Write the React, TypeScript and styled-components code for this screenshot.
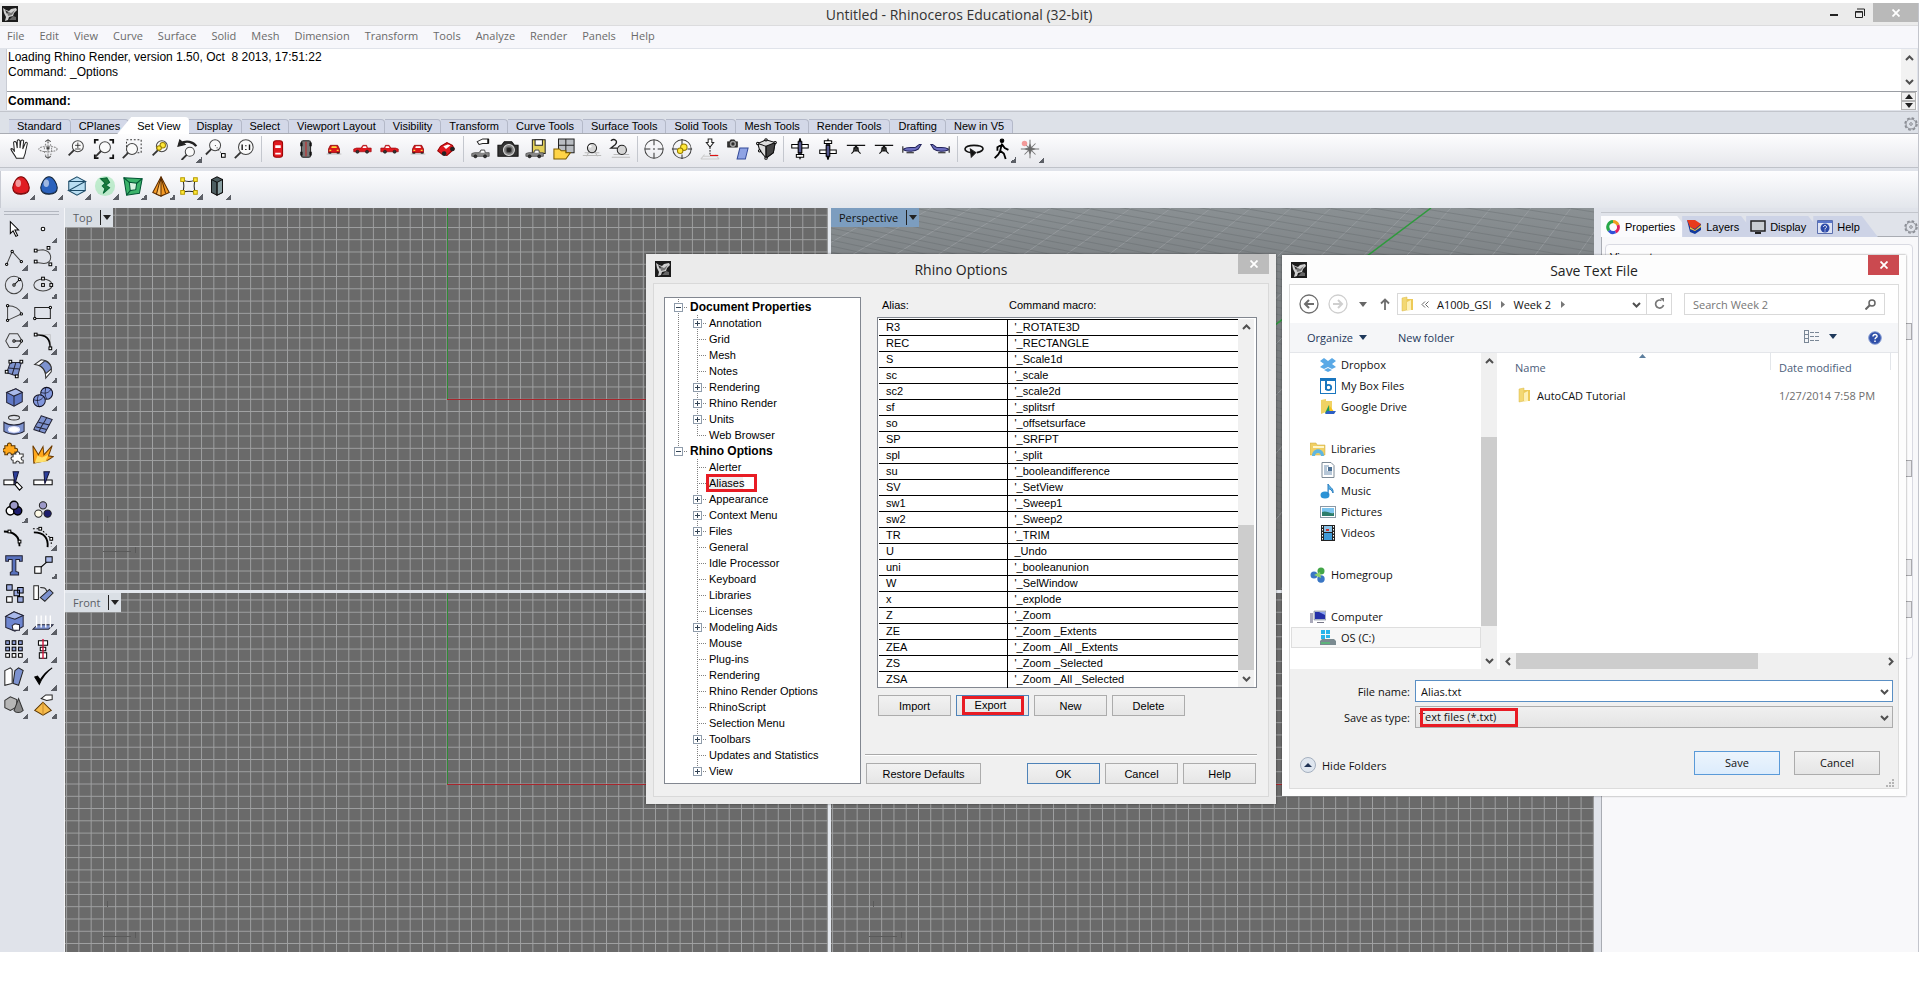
import React from "react";
import styled, { createGlobalStyle, css } from "styled-components";

const UI = `"Open Sans", "Noto Sans", sans-serif`;
const CLASSIC = `"Liberation Sans", Arial, sans-serif`;

const GlobalStyle = createGlobalStyle`
  *, *::before, *::after { box-sizing: border-box; }
  body { margin: 0; background: #fff; font-family: ${UI}; font-size: 11px; color: #000; overflow: hidden; }
  button, input, select { font: inherit; color: inherit; margin: 0; border-radius: 0; }
  ul { list-style: none; margin: 0; padding: 0; }
  svg { display: block; flex: none; }
`;

/* ---------- icon drawings, all on a 24 x 24 board ---------- */

const lens = (x: number, y: number, r = 6) => (
  <g>
    <circle cx={x} cy={y} r={r} fill="#fafafa" stroke="#444" />
    <path d={`M${x - r * 0.7} ${y + r * 0.7}L${x - r - 4} ${y + r + 4}`} stroke="#333" strokeWidth="2" />
  </g>
);
const dots = (pts: number[][], s = 3) => (
  <g fill="#fff" stroke="#000">
    {pts.map(([x, y]) => (
      <rect key={`${x}-${y}`} x={x - s / 2} y={y - s / 2} width={s} height={s} />
    ))}
  </g>
);
const rings = (pts: number[][]) => (
  <g fill="#fff" stroke="#000">
    {pts.map(([x, y]) => (
      <circle key={`${x}-${y}`} cx={x} cy={y} r="1.3" />
    ))}
  </g>
);
const sideCar = (body: string) => (
  <g>
    <path d="M3 15v-3l3-1h5l2-3h4l1 3h4v4z" fill={body} stroke={body === "#888" ? "#444" : "#a00c10"} strokeWidth=".8" />
    <path d="M12.500 11l1-2h3l.5 2z" fill="#fff" stroke="none" />
    <circle cx="7" cy="15" r="1.700" fill="#333" stroke="#111" strokeWidth=".6" />
    <circle cx="17.500" cy="15" r="1.700" fill="#333" stroke="#111" strokeWidth=".6" />
  </g>
);
const frontCar = (glass: string) => (
  <g>
    <path d="M6 12l2-4h8l2 4v4H6z" fill="#d8161b" stroke="#800" strokeWidth=".8" />
    <path d="M9 11l.6-2h5l.6 2z" fill={glass} stroke="none" />
    <path d="M6 16.500h3M15 16.500h3" stroke="#111" strokeWidth="1.500" />
    <path d="M7 13.500h2M15 13.500h2" stroke="#ffd83a" strokeWidth="1.500" />
    <path d="M4 17.500h16" stroke="#999" strokeWidth=".6" />
  </g>
);
const camera = (
  <g>
    <path d="M1 8h4l3-4h8l3 4h4v12H1z" fill="#333" stroke="#111" />
    <circle cx="13" cy="13" r="6" fill="#888" stroke="#ddd" />
    <circle cx="13" cy="13" r="3" fill="#222" stroke="#555" />
  </g>
);
const planeTop = (
  <g>
    <path d="M12 1c2 4 2 16 0 21c-2-5-2-17 0-21z" fill="#6d6fb0" stroke="#000" strokeWidth="1.500" />
    <path d="M3 7h18v4H3zM8 18h8v3H8z" fill="#fff" stroke="#000" />
    <path d="M10 4h4v12h-4z" fill="#55588f" stroke="#000" />
  </g>
);
const planeFront = (
  <g stroke="#111">
    <path d="M2 8h20M9 11h6" strokeWidth="1.200" />
    <path d="M12 8l-3 6M12 8l3 6M7 17l3-3h4l3 3" strokeWidth="1.200" />
    <circle cx="12" cy="12" r="1.500" fill="#555" />
  </g>
);
const planeSide = (
  <g>
    <path d="M3 12c4-3 9-1 13-2l4-3h2l-3 5c-4 3-11 3-16 1z" fill="#6d6fc0" stroke="#22225a" />
    <path d="M2 9v7M6 16h8" stroke="#111" />
  </g>
);
const egg = (c: string, d: string) => (
  <g>
    <path d="M12 2c5 0 9 8 9 12c0 5-4 7-9 7s-9-2-9-7c0-4 4-12 9-12z" fill={c} stroke={d} />
    <ellipse cx="9" cy="9" rx="3" ry="4" fill="#fff" fillOpacity=".55" stroke="none" />
    <path d="M5 17c3 4 11 4 14 0c-2 5-12 5-14 0z" fill="#111" fillOpacity=".5" stroke="none" />
  </g>
);
const BLUE = "#7d92cf";

const ICONS: Record<string, React.ReactNode> = {
  hand: <path d="M8 22C6 18 3 15 2 12c1-1 3 0 4 3L5 5c1-2 2-1 3 0l1 6V3c1-2 2-1 3 0v8l1-8c1-1 2-1 3 0l-1 9 3-7c1-1 2 0 2 1l-2 9c0 3-2 5-2 7z" fill="#fff" />,
  gumball: (
    <g stroke="#888">
      <ellipse cx="12" cy="12" rx="10" ry="3" strokeDasharray="2 1" />
      <path d="M12 2v20" strokeDasharray="4 1" />
      <ellipse cx="12" cy="13" rx="4" ry="8" strokeDasharray="2 2" />
      <path d="M9 4l3-2 3 2M9 20l3 2 3-2" stroke="#444" />
      <circle cx="12" cy="11" r="1.500" fill="#222" />
    </g>
  ),
  zoomInOut: <g>{lens(14, 9)}<path d="M11 8h6M14 5v6M11 12h6" stroke="#222" strokeWidth=".9" /></g>,
  extents: <g>{lens(13, 10)}<path d="M2 6V2h4M18 2h4v4M22 18v4h-4M6 22H2v-4" strokeWidth="2" stroke="#111" /></g>,
  zoomWindow: <g><path d="M6 2h16v14H6z" strokeDasharray="2 2" stroke="#333" />{lens(12, 12)}</g>,
  zoomSelected: <g>{lens(14, 9)}<circle cx="15" cy="8" r="3" fill="#ffe838" stroke="#987d00" /><circle cx="11" cy="11" r="2.500" fill="#ffe838" stroke="#987d00" /></g>,
  undoView: <g>{lens(14, 15, 5)}<path d="M4 6c6-4 14-2 17 3" stroke="#222" strokeWidth="2.500" /><path d="M1 9l2-7 6 5z" fill="#222" /></g>,
  zoomTarget: <g>{lens(11, 8, 6)}<path d="M11 8l8 10" strokeDasharray="1 2" stroke="#222" />{dots([[20, 19]], 4)}</g>,
  zoomOne: <g>{lens(14, 10, 8)}<path d="M10 7v6M18 7v6M14 8v1M14 12v1" stroke="#111" strokeWidth="1.500" /></g>,
  carTop: <g><rect x="7" y="3" width="10" height="18" rx="3" fill="#e01a20" stroke="#900" /><path d="M9 8h6v3H9zM9 16h6v2H9z" fill="#fff" stroke="none" /></g>,
  carBottom: <g><rect x="7" y="3" width="10" height="18" rx="2" fill="#777" stroke="#222" /><path d="M12 4v16" stroke="#c22" /><path d="M7 5v4M17 5v4M7 15v4M17 15v4" stroke="#111" strokeWidth="2.500" /></g>,
  carFront: frontCar("#ffd83a"),
  carRight: sideCar("#e01a20"),
  carLeft: <g transform="matrix(-1 0 0 1 24 0)">{sideCar("#e01a20")}</g>,
  carBack: frontCar("#fff"),
  carPersp: <g><path d="M3 14l3-5 7-4 6 3 2 4-8 7-5-1z" fill="#e01a20" stroke="#900" /><path d="M9 9l5-2 3 1-5 4z" fill="#fff" stroke="none" /><circle cx="10" cy="17" r="2" fill="#222" /><circle cx="19" cy="12" r="2" fill="#222" /></g>,
  namedCar: <g><g transform="translate(0 5)">{sideCar("#888")}</g><path d="M9 4l6-3h6v5h-6l-4 1z" fill="#fff" stroke="#222" /><path d="M21 1v5" strokeWidth="2" stroke="#111" /></g>,
  camera,
  saveCar: <g><path d="M8 2h14v15H8z" fill="#e2cf58" stroke="#222" /><path d="M11 2h8v6h-8z" fill="#fff" stroke="#222" /><g transform="translate(-2 5)">{sideCar("#888")}</g></g>,
  viewports: <g><path d="M6 1h17v15H6zM14 1v15M6 8h17" fill="#b9bdc2" stroke="#222" /><path d="M1 23V12h6l2 2h5v2h5l-5 7z" fill="#ffd447" stroke="#7a5a00" /></g>,
  ball: <g><path d="M4 16h16M2 19h20M6 20l3-5M18 20l-3-5" stroke="#bbb" /><circle cx="12" cy="11" r="5" fill="#d5d5d5" stroke="#222" /><circle cx="10" cy="9" r="1.500" fill="#fff" stroke="none" /></g>,
  ball2: <g><path d="M5 18h17M3 21h20" stroke="#bbb" /><circle cx="14" cy="13" r="5" fill="#d5d5d5" stroke="#222" /><path d="M2 3c4-3 8 0 5 4l-5 4h7" stroke="#222" strokeWidth="1.500" /></g>,
  target: <g><circle cx="12" cy="12" r="10" stroke="#444" /><path d="M12 2v6M12 16v6M2 12h6M16 12h6M12 11v2" stroke="#333" /></g>,
  targetSel: <g><circle cx="12" cy="12" r="10" stroke="#444" /><path d="M12 1v6M12 18v5M1 12h6M18 12h5" stroke="#333" /><circle cx="14" cy="10" r="3.500" fill="#ffe838" stroke="#987d00" /><circle cx="10" cy="14" r="3" fill="#ffe838" stroke="#987d00" /></g>,
  cplane: <g><path d="M4 20h16M2 23h20M6 18l-4 5M18 18l4 5" stroke="#ccc" /><path d="M10 1h4v4h2l-4 5-4-5h2z" fill="#fff" stroke="#222" /><path d="M12 10v9" strokeDasharray="2 1" stroke="#222" /><path d="M12 19h9" stroke="#d00" /></g>,
  camPlane: <g><g transform="scale(.5)">{camera}</g><path d="M14 11h9l-3 12h-9z" fill="#8fa3e4" stroke="#334a9a" /></g>,
  cube: <g><path d="M3 6l9-4 10 3-2 11-8 6-7-9z" fill="#ddd" stroke="#111" /><path d="M12 9l10-4-2 11-8 6z" fill="#444" stroke="#111" /><path d="M3 6l9 3v13" stroke="#111" />{rings([[3, 6], [12, 2], [22, 5], [12, 22], [5, 14]])}</g>,
  planeTop,
  planeBottom: <g transform="rotate(180 12 12)">{planeTop}</g>,
  planeFront,
  planeBack: planeFront,
  planeSide,
  planeSide2: <g transform="matrix(-1 0 0 1 24 0)">{planeSide}</g>,
  orbit: <g><path d="M9 16c-10-1-9-8 3-8s13 6 3 8" stroke="#111" strokeWidth="1.800" /><path d="M8 12l6 4-5 5z" fill="#111" /></g>,
  walk: <g stroke="#000"><circle cx="12" cy="3" r="2" fill="#000" /><path d="M12 6l-2 8 4 3 2 6M10 14l-2 4-4 4M12 7l-5 3v4M12 7l3 4 4 2" strokeWidth="2" /></g>,
  star: <g stroke="#777"><path d="M12 2v20M2 12h20M6 6l12 12M18 6L6 18" /><path d="M12 7l1.500 3.500L17 12l-3.500 1.500L12 17l-1.500-3.500L7 12l3.500-1.500z" fill="#666" /><circle cx="6" cy="6" r="3" fill="#f39a9a" stroke="none" /></g>,

  redEgg: egg("#e01c22", "#700"),
  blueEgg: egg("#2b62bd", "#123"),
  polyhedron: <g stroke="#1c4a66"><path d="M12 2l9 5v10l-9 5-9-5V7z" fill="#b9def2" /><path d="M3 7h18L3 17h18" /></g>,
  glow: <g><circle cx="12" cy="12" r="11" fill="#7fe09a" fillOpacity=".45" stroke="none" /><path d="M7 4l7-1 3 5-4 3 4 3-7 6 2-5-3-3 3-3z" fill="#1f7a3c" stroke="#063" /></g>,
  greenBox: <g stroke="#053"><path d="M2 3l20 1-3 16-14 2z" fill="#3bb36a" /><path d="M8 8l8 1-1 7-6 1z" fill="#d7f3df" /><path d="M2 3l6 5M22 4l-6 5M5 22l4-5" /></g>,
  cone: <g><path d="M12 2l9 17-9 4-9-4z" fill="#f49a24" stroke="#5b2c00" /><path d="M12 2v21l-5-2zM12 2l5 18" stroke="#5b2c00" fill="#ffc56a" /></g>,
  cage: <g><path d="M5 5c5 3 9 3 14 0c-2 5-2 9 0 14c-5-2-9-2-14 0c2-5 2-9 0-14z" stroke="#222" /><path d="M3 3h4v4H3zM17 3h4v4h-4zM3 17h4v4H3zM17 17h4v4h-4z" fill="#ffe838" stroke="#b59a00" /></g>,
  darkBox: <g stroke="#111"><path d="M6 5l6-3 6 3v14l-6 3-6-3z" fill="#4d5d60" /><path d="M12 8l6-3v14l-6 3z" fill="#8aa0a3" /><path d="M6 5l6 3v14" /></g>,

  arrow: <path d="M8 4v13l3-3 3 6 2-1-3-6h4z" fill="#fff" stroke="#000" />,
  point: <circle cx="12" cy="12" r="2" fill="#fff" stroke="#000" />,
  polyline: <g><path d="M4 20l6-14 10 11" stroke="#444" />{rings([[4, 20], [10, 6], [20, 17]])}</g>,
  curve: <g><path d="M5 5l7-1c11 2 11 15 1 15l-8-1" stroke="#444" />{dots([[4, 5], [18, 2], [4, 17], [20, 20]])}</g>,
  circle: <g><circle cx="12" cy="12" r="9.500" stroke="#444" /><path d="M12 12l6-6" stroke="#000" />{rings([[12, 12], [18, 6]])}</g>,
  ellipse: <g><ellipse cx="12" cy="12" rx="10" ry="6.500" stroke="#444" />{dots([[12, 5], [12, 12], [21, 12]])}</g>,
  arc: <g><path d="M5 4c8 0 13 3 15 9L5 20z" stroke="#444" />{rings([[5, 4], [20, 13], [5, 20]])}</g>,
  rect: <g><path d="M3 6h17v12H3z" stroke="#222" />{rings([[20, 6], [3, 18]])}</g>,
  polygon: <g><path d="M7 4h9l5 8-5 7H7l-4-7z" stroke="#444" /><path d="M12 12h8" stroke="#000" />{rings([[12, 12], [20, 12]])}</g>,
  fillet: <g><path d="M4 5c11 0 16 4 16 15" stroke="#000" strokeWidth="2" /><path d="M4 5h16v15" stroke="#aaa" strokeWidth=".6" />{dots([[4, 5], [20, 20]])}</g>,
  patch: <g><path d="M8 5h12l-4 15L4 16z" fill={BLUE} stroke="#223" /><path d="M14 5l-4 13M6 11l12 1" stroke="#223" />{dots([[8, 4], [20, 4], [4, 15], [15, 20]])}</g>,
  bend: <g stroke="#333"><path d="M3 7l7-5c9 1 12 6 11 13l-6 7c0-8-3-14-12-15z" fill="#fff" /><path d="M8 8l6-5c5 2 7 6 7 9l-6 5c-1-4-3-7-7-9z" fill={BLUE} /></g>,
  box: <g stroke="#223"><path d="M4 7l10-4 7 4v10l-9 5-8-4z" fill="#5f78c6" /><path d="M4 7l10-4 7 4-9 4z" fill="#a9b9ea" /><path d="M12 11v11" /></g>,
  spheres: <g stroke="#112"><circle cx="16" cy="8" r="6.500" fill="#8297dc" /><circle cx="8" cy="16" r="6.500" fill="#8297dc" /><path d="M2 15c5 2 9 0 11-4M10 7c5 2 9 0 11-4M7 10c-2 5-1 9 1 13M15 2c-1 5-1 9 1 12" strokeWidth=".8" /></g>,
  pipe: <g><ellipse cx="12" cy="4" rx="6" ry="2.500" stroke="#333" /><path d="M1 9c6 4 16 4 22 0v10c-6 4-16 4-22 0z" fill={BLUE} stroke="#223" /><ellipse cx="12" cy="17" rx="6" ry="3" fill="#fff" stroke="#eef" /></g>,
  surface: <g stroke="#223"><path d="M10 2l12 4-8 15-12-4c1-4 6-10 8-15z" fill={BLUE} /><path d="M16 4c-2 5-7 10-8 15M7 9l12 3M4 14l12 3" /></g>,
  puzzle: <g><path d="M2 4h3c-1-4 5-4 4 0h4v3c4-1 4 5 0 4v3H9c1-3-5-3-4 0H2v-3c-3 0-3-4 0-4z" fill="#ffa81c" stroke="#5b3600" /><path d="M11 13h3c-1-3 5-3 4 0h4v3c-3 0-3 4 0 4v3h-4c0-3-4-3-4 0h-3v-3c-3 0-3-4 0-4z" fill="#fff" stroke="#333" /></g>,
  explode: <g><path d="M2 23L1 4l6 10 5-9 1 9 9-10-4 11 5 1-6 4z" fill="#ffa81c" stroke="#6b3a00" /><path d="M3 23l3-8 5 2 7-3-3 6 3 1z" fill="#ffe06a" stroke="none" /></g>,
  split: <g><path d="M1 11h11v5H1zM15 13l6 6-3 3-5-6z" fill="#fff" stroke="#000" /><path d="M11 2h6l-4 13z" fill="#2c3f9c" stroke="#113" /></g>,
  trim: <g><path d="M2 11h20v5H2z" fill="#fff" stroke="#000" /><path d="M13 2h6l-5 13z" fill="#2c3f9c" stroke="#113" /></g>,
  group: <g stroke="#000" strokeWidth="1.500"><circle cx="8" cy="14" r="4.500" fill="#fff" /><circle cx="16" cy="14" r="4.500" fill="#1e1e6e" /><circle cx="12" cy="8" r="4.500" fill="#9c99c8" /></g>,
  ungroup: <g stroke="#222"><circle cx="7" cy="17" r="4" fill="#fffbe8" /><circle cx="17" cy="17" r="4" fill="#1e1e6e" /><circle cx="12" cy="8" r="4" fill="#9c99c8" /></g>,
  editPts: <g><path d="M1 6c12 0 17 6 17 16" stroke="#000" strokeWidth="2" />{dots([[7, 6], [18, 17]])}</g>,
  ctrlPts: <g><path d="M2 7c11 0 16 6 15 16" stroke="#000" strokeWidth="2" /><path d="M1 3h8l12 11v8" strokeDasharray="2 2" stroke="#000" />{dots([[9, 3], [21, 14]])}</g>,
  text: <path d="M3 2h18v6h-3V6h-4v13l3 1v3H8v-3l2-1V6H6v2H3z" fill="#5871bd" stroke="#223" />,
  scale: <g><path d="M9 15l8-7" stroke="#000" /><path d="M3 14h7v7H3z" fill="#fff" stroke="#000" /><path d="M15 3h7v6h-7z" fill="#a9b9ea" stroke="#000" /></g>,
  array: <g stroke="#000"><path d="M4 3h6v6H4zM16 6h6v6h-6zM12 9h6v6h-6zM16 16h6v6h-6z" fill="#9aaae0" /><path d="M4 16h6v6H4z" fill="#fff" /></g>,
  orient: <g stroke="#222"><path d="M2 4h5v15H2z" fill="#fff" /><path d="M9 17L19 8l4 4-9 9z" fill={BLUE} /><path d="M9 6c4 0 6 0 7 4" /></g>,
  boolean: <g stroke="#223"><path d="M3 7l9-5 10 4v12l-9 5-10-4z" fill="#6e86d0" /><path d="M3 7l9-5 10 4-9 4z" fill="#a9b9ea" /><path d="M10 17l3-2 5 1v6h-7z" fill="#fff" /></g>,
  project: <g><path d="M1 21l5-5h17l-5 5z" fill={BLUE} stroke="#223" /><path d="M5 6v13M10 6v13M15 6v13M20 6v13" stroke="#fff" strokeWidth="1.500" /></g>,
  grid: <g stroke="#000">{[3, 10, 17].map((y) => [3, 10, 17].map((x) => <rect key={`${x}-${y}`} x={x} y={y} width="4" height="4" fill={y === 17 ? "#fff" : "#8f9fd8"} />))}</g>,
  align: <g><path d="M7 3h10v5H7zM9 10h6v4H9zM8 16h8v6H8z" fill="#fff" stroke="#000" /><path d="M12 1v22" stroke="#d0103a" strokeWidth="1.500" /></g>,
  mirror: <g stroke="#222"><path d="M2 5l6-3 2 2v15l-8 2z" fill="#fff" /><path d="M13 5l4-3 5 3-5 16-6-2z" fill={BLUE} /></g>,
  check: <path d="M3 12l5 8C11 13 15 7 22 2c-5 3-10 8-13 13l-3-4z" fill="#000" stroke="#000" />,
  solids: <g stroke="#333"><path d="M2 7l6-4 7 3v8l-7 4-6-3z" fill="#b6b6b6" /><path d="M17 5l5 13c-3 3-8 3-10 0z" fill="#888" /></g>,
  render: <g><path d="M12 9l9 9-9 5-9-5z" fill="#f6bb4b" stroke="#5b3600" /><path d="M12 9v14" stroke="#c78a2a" /><path d="M10 5l5-4h7v5l-6 1z" fill="#fff" stroke="#222" /></g>,
};

const Glyph = ({ name }: { name: string }) => (
  <svg width="22" height="22" viewBox="0 0 24 24" fill="none" stroke="#222" strokeWidth="1.1" aria-hidden="true">
    {ICONS[name]}
  </svg>
);

const RhinoMark = () => (
  <svg width="16" height="16" viewBox="0 0 16 16" aria-hidden="true">
    <rect width="16" height="16" fill="#1b1b1b" />
    <path d="M1 2l3 2 3 1 2-2 5-1 1 2-3 3-1 3-4 1-1 3-3 1 1-4-2-4z" fill="#d0d0d0" />
    <path d="M5 5l4 2 4-3-3 5-4 1z" fill="#777" />
    <path d="M7 14l4-4 3 1v3z" fill="#666" />
    <path d="M3 4l3 2-1 2z" fill="#222" />
  </svg>
);
const CrossMark = () => (
  <svg width="8" height="8" viewBox="0 0 8 8" aria-hidden="true">
    <path d="M.500 .500l7 7M7.500 .500l-7 7" stroke="#fff" strokeWidth="1.800" />
  </svg>
);
const Gear = () => (
  <svg width="14" height="14" viewBox="0 0 14 14" fill="none" stroke="#8a8d94" aria-hidden="true">
    <circle cx="7" cy="7" r="6" strokeWidth="1.500" strokeDasharray="2.700 2" />
    <circle cx="7" cy="7" r="5" />
    <circle cx="7" cy="7" r="1.300" />
  </svg>
);
const TURN = { up: 0, right: 90, down: 180, left: 270 };
const Chevron = ({ dir }: { dir: keyof typeof TURN }) => (
  <svg width="9" height="9" viewBox="0 0 9 9" fill="none" aria-hidden="true">
    <path d="M1 6l3.500-3.500L8 6" stroke="#505050" strokeWidth="2" transform={`rotate(${TURN[dir]} 4.500 4.500)`} />
  </svg>
);
const Caret = ({ color = "#222" }: { color?: string }) => (
  <svg width="8" height="5" viewBox="0 0 8 5" aria-hidden="true">
    <path d="M0 0h8L4 5z" fill={color} />
  </svg>
);

/* ---------- main window ---------- */

const Page = styled.div`
  position: relative;
  min-height: 100vh;
  padding: 3px 4px 47px 0;
  display: flex;
  flex-direction: column;
`;
const MainWindow = styled.main`
  flex: 1;
  display: flex;
  flex-direction: column;
  background: #e0e3ea;
  border-right: 1px solid #c3c5cc;
`;
const TitleBar = styled.header`
  display: grid;
  grid-template-columns: 1fr auto 1fr;
  align-items: start;
  height: 23px;
  background: #ebebeb;
  border-bottom: 1px solid #dcdcde;
`;
const Brand = styled.span`
  padding: 3px 2px;
`;
const Title = styled.h1`
  margin: 0;
  font: 400 14px/23px ${UI};
  color: #333;
`;
const WindowButtons = styled.div`
  display: flex;
  justify-content: flex-end;
`;
const WindowButton = styled.button<{ $close?: boolean }>`
  width: ${(p) => (p.$close ? 45 : 26)}px;
  height: 19px;
  padding: 0;
  border: 0;
  display: grid;
  place-items: center;
  background: ${(p) => (p.$close ? "#b9b9b9" : "transparent")};
`;
const MenuBar = styled.nav`
  display: flex;
  align-items: flex-start;
  gap: 15px;
  height: 22px;
  padding: 0 7px;
  background: #f7f7fb;
`;
const MenuItem = styled.button`
  padding: 0;
  border: 0;
  background: none;
  font-size: 11px;
  line-height: 19px;
  color: #6a6a6a;
`;
const CommandArea = styled.section`
  margin: 1px 1px 0 6px;
  background: #fff;
  border-left: 1px solid #c9ccd4;
  font: 12px/15px ${CLASSIC};
`;
const History = styled.div`
  display: flex;
  justify-content: space-between;
  height: 43px;
  border-bottom: 1px solid #9a9da3;
`;
const HistoryText = styled.div`
  padding: 1px;
  white-space: pre;
`;
const HistoryScroll = styled.div`
  width: 16px;
  padding: 5px 0;
  display: flex;
  flex-direction: column;
  align-items: center;
  justify-content: space-between;
  background: #f2f2f2;
`;
const Prompt = styled.div`
  display: flex;
  height: 18px;
  align-items: center;
`;
const PromptLabel = styled.label`
  padding: 0 4px 0 1px;
  font-size: 12px;
  font-weight: 700;
`;
const PromptInput = styled.input`
  flex: 1;
  height: 18px;
  border: 0;
  outline: 0;
  padding: 0;
`;
const Spinner = styled.div`
  display: grid;
  width: 15px;
  height: 18px;
  margin-right: 1px;
`;
const SpinButton = styled.button<{ $flip?: boolean }>`
  padding: 0;
  border: 1px solid #b5b5b5;
  background: #f0f0f0;
  display: grid;
  place-items: center;
  svg { transform: ${(p) => (p.$flip ? "none" : "rotate(180deg)")}; }
`;
const TabStrip = styled.div`
  display: flex;
  align-items: flex-end;
  height: 23px;
  margin-top: 1px;
  padding-left: 9px;
  border-top: 1px solid #c2c5cc;
  border-bottom: 1px solid #a9acb3;
  background: #dde1e8;
`;
const ToolTab = styled.button<{ $active?: boolean }>`
  height: 14px;
  padding: 0 8px;
  border: 1px solid #b4b9c9;
  border-width: 1px 1px 0 0;
  border-radius: 0 4px 0 0;
  background: ${(p) => (p.$active ? "#fff" : "#d3d8e8")};
  font: 11px/13px ${CLASSIC};
  white-space: nowrap;
  ${(p) =>
    p.$active &&
    css`
      height: 17px;
      margin: 0 -1px -1px -12px;
      padding: 2px 9px 0 20px;
      border-width: 0;
      clip-path: polygon(14px 0, 100% 0, 100% 100%, 0 100%);
    `}
`;
const Push = styled.span`
  margin-left: auto;
  padding-bottom: 2px;
`;
const ToolRow = styled.div<{ $second?: boolean }>`
  display: flex;
  align-items: center;
  height: 34px;
  padding: 0 0 4px 6px;
  background: linear-gradient(#fdfdfe, ${(p) => (p.$second ? "#e3e6ec" : "#e6e7ec")});
  ${(p) =>
    p.$second
      ? css`
          height: 37px;
          margin-top: 3px;
          border-left: 1px solid #c9ccd4;
          padding-bottom: 8px;
        `
      : css`
          border-bottom: 1px solid #bfc2c9;
        `}
`;
const ToolButton = styled.button<{ $more?: boolean }>`
  width: 28px;
  height: 28px;
  flex: none;
  padding: 0;
  border: 0;
  display: grid;
  place-items: center;
  background: ${(p) =>
    p.$more ? "linear-gradient(135deg, transparent 50%, #5c5f66 50%) right bottom / 6px 6px no-repeat" : "none"};
`;
const Divider = styled.span`
  width: 1px;
  height: 26px;
  margin: 0 2px 0 3px;
  background: #c4c7ce;
`;

const Workspace = styled.div`
  flex: 1;
  display: flex;
  min-height: 0;
`;
const SideTools = styled.aside`
  width: 65px;
  padding: 3px 5px 0 0;
  border-right: 1px solid #f4f5f8;
`;
const Grip = styled.div`
  height: 4px;
  margin-left: 4px;
  border: 1px solid #b3b7c0;
  border-width: 1px 0;
`;
const SideGrid = styled.div`
  display: grid;
  grid-template-columns: 29px 28px;
  grid-auto-rows: 28px;
`;
const Viewports = styled.div`
  flex: 1;
  display: grid;
  grid-template-columns: 1fr 1fr;
  grid-template-rows: 381fr 359fr;
  gap: 3px;
  background: #e4e8ee;
`;
const ViewportBox = styled.section<{ $persp?: boolean }>`
  display: grid;
  min-height: 0;
  min-width: 0;
  overflow: hidden;
  background: ${(p) => (p.$persp ? "linear-gradient(#8a9093, #7e8386 50px, #6a6a6a 400px)" : "#6a6a6a")};
  > * { grid-area: 1 / 1; }
  > svg { width: 100%; height: 100%; }
`;
const ViewLabel = styled.button<{ $active?: boolean }>`
  justify-self: start;
  align-self: start;
  display: flex;
  align-items: center;
  height: 19px;
  padding: 0 0 0 8px;
  border: 0;
  background: ${(p) => (p.$active ? "#7c9dbf" : "#dadfe5")};
  color: ${(p) => (p.$active ? "#111" : "#5b6066")};
  font-size: 11px;
`;
const LabelCaret = styled.span`
  margin-left: 8px;
  padding: 5px 2px;
  border-left: 1px solid #222;
`;

const PlanGrid = ({ id, axis }: { id: string; axis: string }) => (
  <svg aria-hidden="true" shapeRendering="crispEdges">
    <defs>
      <pattern id={id} width="12.270" height="12.270" patternUnits="userSpaceOnUse">
        <path d="M.5 0V12.270M0 .5H12.270" stroke="#a0a1a2" strokeWidth="1" />
      </pattern>
    </defs>
    <svg x="50%" y={axis} overflow="visible">
      <rect x="-490.800" y="-245.400" width="981.600" height="736.200" fill={`url(#${id})`} />
      <path d="M.5 0V-300" stroke="#2f8a35" />
      <path d="M0 .5H400" stroke="#a8262c" />
    </svg>
    <path d="M42 308v6M38 343h28M70 339v6" stroke="#5a5a5a" />
  </svg>
);
const PerspGrid = () => (
  <svg aria-hidden="true">
    <g strokeWidth="1" fill="none">
      {Array.from({ length: 46 }, (_, i) => (
        <path key={`a${i}`} d={`M${i * 40 - 260} 0L${i * 62 - 1100} 381`} stroke="#a5aaad" strokeOpacity=".5" />
      ))}
      {Array.from({ length: 60 }, (_, i) => (
        <path key={`b${i}`} d={`M0 ${i * 6 - 160}L763 ${i * 8 - 60}`} stroke="#5f6467" strokeOpacity=".35" />
      ))}
      <path d="M600 0L400 150L0 360" stroke="#2e9a3c" strokeWidth="1.500" />
    </g>
  </svg>
);
const Viewport = ({ name, active, axis = "50%" }: { name: string; active?: boolean; axis?: string }) => (
  <ViewportBox $persp={active} aria-label={`${name} viewport`}>
    {active ? <PerspGrid /> : <PlanGrid id={`grid-${name}`} axis={axis} />}
    <ViewLabel $active={active}>
      {name}
      <LabelCaret>
        <Caret />
      </LabelCaret>
    </ViewLabel>
  </ViewportBox>
);

const Panel = styled.aside`
  width: 324px;
  padding: 4px 0 0 7px;
  display: flex;
  flex-direction: column;
`;
const PanelTabs = styled.div`
  display: flex;
  align-items: flex-end;
  height: 25px;
  border-top: 1px solid #c2c5cc;
  border-bottom: 1px solid #a9acb3;
`;
const PanelTab = styled.button<{ $active?: boolean }>`
  display: flex;
  align-items: center;
  gap: 4px;
  height: 21px;
  margin-bottom: -1px;
  padding: 0 18px 0 4px;
  border: 0;
  background: ${(p) => (p.$active ? "#fbfbfd" : "#cdd3e6")};
  clip-path: polygon(0 0, calc(100% - 16px) 0, 100% 100%, 0 100%);
  font: 11px/20px ${CLASSIC};
  & + & { margin-left: -11px; }
`;
const PanelBody = styled.div`
  flex: 1;
  padding: 7px 5px 0 3px;
  background: #f8f8fa;
  border-left: 1px solid #a9acb3;
`;
const PanelGroup = styled.div`
  display: flex;
  flex-direction: column;
  align-items: flex-end;
  height: 415px;
  border: 1px solid #d9dae2;
  border-radius: 4px;
  background: #fcfcfd;
`;
const PanelHeading = styled.h2`
  align-self: flex-start;
  margin: 5px 0 59px 4px;
  font: 11px/14px ${CLASSIC};
`;
const PanelField = styled.button<{ $gap: number }>`
  width: 40px;
  height: 17px;
  flex: none;
  margin-bottom: ${(p) => p.$gap}px;
  border: 1px solid #a9a9ad;
  background: #e9e9ec;
`;

/* ---------- dialogs ---------- */

const Dialog = styled.section<{ $x: number; $y: number; $w: number; $light?: boolean }>`
  position: absolute;
  left: ${(p) => p.$x}px;
  top: ${(p) => p.$y}px;
  width: ${(p) => p.$w}px;
  padding: 0 7px 7px;
  background: ${(p) => (p.$light ? "#fdfdfd" : "#ebebeb")};
  box-shadow: 0 0 2px rgba(0, 0, 0, 0.45);
`;
const DialogTitle = styled.header`
  display: grid;
  grid-template-columns: 1fr auto 1fr;
  height: 29px;
  align-items: start;
`;
const DialogBrand = styled.span`
  padding: 7px 2px 0;
`;
const DialogHeading = styled.h2`
  margin: 0;
  font: 400 14px/31px ${UI};
  color: #222;
`;
const DialogClose = styled.button<{ $red?: boolean }>`
  justify-self: end;
  width: 31px;
  height: 20px;
  padding: 0;
  border: 0;
  display: grid;
  place-items: center;
  background: ${(p) => (p.$red ? "#cb4a50" : "#bcbcbc")};
`;
const OptionsBody = styled.div`
  display: flex;
  gap: 4px;
  height: 514px;
  padding: 13px 11px 12px 10px;
  border: 1px solid #d9d9d9;
  background: #f0f0f0;
  font: 11px/16px ${CLASSIC};
`;
const Tree = styled.ul`
  width: 197px;
  padding: 1px 0 0 4px;
  border: 1px solid #828790;
  background: #fff;
`;
const TreeRow = styled.li`
  display: flex;
  height: 16px;
`;
const vLine = "repeating-linear-gradient(#808080 0 1px, transparent 1px 2px) 9px 0";
const hLine = "repeating-linear-gradient(90deg, #808080 0 1px, transparent 1px 2px) 9px 8px / 10px 1px no-repeat";
const Guide = styled.span<{ $v?: boolean; $h?: boolean; $end?: boolean }>`
  width: 19px;
  display: grid;
  place-items: center;
  background: ${(p) =>
    [p.$v && `${vLine} / 1px ${p.$end ? "8px" : "16px"} no-repeat`, p.$h && hLine].filter(Boolean).join(", ") || "none"};
`;
const Expander = styled.button`
  width: 9px;
  height: 9px;
  padding: 0;
  border: 1px solid #8f9cab;
  background: #fff;
`;
const TreeLabel = styled.span<{ $root?: boolean; $marked?: boolean }>`
  padding: 0 2px;
  font-weight: ${(p) => (p.$root ? 700 : 400)};
  ${(p) => p.$root && "font-size: 12px;"}
  white-space: nowrap;
  ${(p) =>
    p.$marked &&
    css`
      width: 51px;
      margin: -1px 0 -1px -1px;
      padding: 1px 3px 0;
      background: linear-gradient(#efefef, #efefef) 3px 3px / 34px 12px no-repeat;
      box-shadow: inset 0 0 0 3px #e81c24;
    `}
`;
const OptionsMain = styled.div`
  flex: 1;
  display: flex;
  flex-direction: column;
`;
const ColumnHeads = styled.div`
  display: grid;
  grid-template-columns: 127px 1fr;
  padding-left: 17px;
  line-height: 17px;
  height: 20px;
`;
const TableBox = styled.div`
  display: flex;
  height: 371px;
  margin-left: 12px;
  padding: 1px 2px 0 1px;
  border: 1px solid #828790;
  background: #fff;
`;
const AliasTable = styled.table`
  flex: 1;
  height: 368px;
  border-collapse: collapse;
  td {
    height: 16px;
    padding: 0 7px;
    border-top: 1px solid #000;
    line-height: 15px;
  }
  td:first-child {
    width: 128px;
    border-right: 1px solid #000;
  }
`;
const ScrollV = styled.div`
  width: 16px;
  flex: none;
  display: flex;
  flex-direction: column;
  align-items: center;
  background: #f0f0f0;
`;
const ScrollH = styled.div`
  display: flex;
  align-items: center;
  height: 16px;
  background: #f0f0f0;
`;
const Arrow = styled.button`
  width: 16px;
  height: 17px;
  flex: none;
  padding: 0;
  border: 0;
  display: grid;
  place-items: center;
  background: none;
`;
const Thumb = styled.span<{ $size: number }>`
  flex: ${(p) => p.$size} 0 0;
  align-self: stretch;
  background: #cdcdcd;
`;
const Track = styled.span<{ $size: number }>`
  flex: ${(p) => p.$size} 0 0;
`;
const ButtonRow = styled.div<{ $foot?: boolean }>`
  display: flex;
  gap: 5px;
  padding: 7px 0 0 13px;
  ${(p) =>
    p.$foot &&
    css`
      margin-top: auto;
      padding: 8px 0 0 1px;
      border-top: 1px solid #a9a9a9;
      box-shadow: inset 0 1px #fff;
    `}
`;
const PushButton = styled.button<{ $w?: number; $focus?: boolean; $after?: number }>`
  display: grid;
  place-items: center;
  width: ${(p) => p.$w ?? 73}px;
  height: 21px;
  padding: 0;
  margin-right: ${(p) => p.$after ?? 0}px;
  border: 1px solid ${(p) => (p.$focus ? "#4f83b8" : "#acacac")};
  background: linear-gradient(#f2f2f2, #e6e6e6);
  line-height: 18px;
`;
const RedFrame = styled.span`
  width: 62px;
  height: 19px;
  border: 3px solid #e81c24;
  line-height: 13px;
  padding-right: 4px;
`;

/* ---------- save dialog ---------- */

const SaveBody = styled.div`
  border: 1px solid #dcdcdc;
  background: #f0f0f0;
  font-size: 11px;
  color: #111;
`;
const NavRow = styled.div`
  display: flex;
  align-items: center;
  height: 38px;
  padding: 0 13px 0 9px;
  background: #fff;
`;
const RoundButton = styled.button<{ $m?: number }>`
  width: 20px;
  height: 20px;
  padding: 0;
  margin-right: ${(p) => p.$m ?? 0}px;
  border: 0;
  display: grid;
  place-items: center;
  background: none;
`;
const Address = styled.div`
  display: flex;
  align-items: center;
  width: 275px;
  height: 22px;
  margin-left: 2px;
  padding-left: 2px;
  border: 1px solid #d9d9d9;
`;
const Crumb = styled.button<{ $earlier?: boolean }>`
  padding: 0;
  margin: ${(p) => (p.$earlier ? "0 0 0 5px" : "0 10px 0 8px")};
  border: 0;
  background: none;
`;
const AddressEnd = styled.span`
  display: flex;
  align-items: center;
  margin-left: auto;
`;
const Refresh = styled.button`
  width: 25px;
  height: 20px;
  margin-left: 5px;
  padding: 0;
  border: 0;
  border-left: 1px solid #d9d9d9;
  background: none;
  display: grid;
  place-items: center;
`;
const SearchBox = styled.label`
  flex: 1;
  display: flex;
  align-items: center;
  height: 22px;
  margin-left: 12px;
  padding: 0 8px;
  border: 1px solid #d9d9d9;
`;
const SearchInput = styled.input`
  flex: 1;
  min-width: 0;
  padding: 0;
  border: 0;
  outline: 0;
  background: none;
  &::placeholder { color: #767676; opacity: 1; }
`;
const FileTools = styled.div`
  display: flex;
  align-items: center;
  height: 30px;
  padding: 0 16px 0 17px;
  background: #f5f6f8;
  border-bottom: 1px solid #e4e6ea;
  color: #1e395b;
`;
const FlatButton = styled.button<{ $gap?: number; $inner?: number }>`
  display: flex;
  align-items: center;
  gap: ${(p) => p.$inner ?? 6}px;
  padding: 0;
  margin-right: ${(p) => p.$gap ?? 0}px;
  border: 0;
  background: none;
`;
const FolderToggle = styled(FlatButton)`
  padding-top: 4px;
`;
const Panes = styled.div`
  display: flex;
  height: 316px;
  background: #fff;
`;
const Places = styled.ul`
  width: 191px;
  padding: 1px 0 0 1px;
`;
const Place = styled.li<{ $group?: boolean; $above?: boolean; $selected?: boolean }>`
  display: flex;
  align-items: center;
  gap: 5px;
  height: 21px;
  margin-top: ${(p) => (p.$above ? 21 : 0)}px;
  padding-left: ${(p) => (p.$group ? 18 : 28)}px;
  border: 1px solid ${(p) => (p.$selected ? "#dedede" : "transparent")};
  background: ${(p) => (p.$selected ? "#f7f7f7" : "none")};
`;
const Files = styled.div`
  flex: 1;
  display: flex;
  flex-direction: column;
  justify-content: space-between;
  padding-left: 3px;
`;
const FileTable = styled.table`
  width: 100%;
  border-collapse: collapse;
  margin-left: 8px;
  th {
    position: relative;
    height: 17px;
    padding: 8px 0 0 9px;
    font-weight: 400;
    text-align: left;
    line-height: 13px;
    color: #4c607a;
    background: linear-gradient(#e3e6ea, #e3e6ea) 0 0 / 1px 17px no-repeat;
  }
  th:first-child {
    padding-left: 7px;
    background: none;
  }
  td {
    height: 21px;
    padding: 13px 0 0 9px;
    color: #6d6d6d;
  }
`;
const SortMark = styled.span`
  position: absolute;
  top: 1px;
  left: 50%;
`;
const FileName = styled.span`
  display: flex;
  align-items: center;
  gap: 4px;
  color: #111;
`;
const Form = styled.div`
  display: grid;
  grid-template-columns: 125px 1fr;
  row-gap: 4px;
  align-items: center;
  padding: 11px 5px 0 0;
`;
const FormLabel = styled.label`
  padding-right: 5px;
  text-align: right;
`;
const Field = styled.div`
  display: grid;
  align-items: center;
  > * { grid-area: 1 / 1; }
  > svg { justify-self: end; margin-right: 4px; pointer-events: none; }
`;
const fieldStyle = css`
  width: 100%;
  height: 22px;
  padding: 0 5px;
  outline: 0;
  line-height: 20px;
`;
const NameInput = styled.input`
  ${fieldStyle}
  border: 1px solid #5a8fc4;
  background: #fff;
`;
const TypeSelect = styled.select`
  ${fieldStyle}
  padding: 0 3px;
  appearance: none;
  border: 1px solid #acacac;
  background: linear-gradient(#f0f0f0, #e4e4e4);
`;
const TypeMark = styled.span`
  width: 98px;
  height: 19px;
  margin-left: 5px;
  border: 3px solid #e81c24;
  pointer-events: none;
`;
const SaveFoot = styled.div`
  display: flex;
  align-items: center;
  height: 60px;
  padding: 10px 0 0 10px;
`;
const SaveButton = styled.button<{ $primary?: boolean }>`
  width: 86px;
  height: 24px;
  margin-right: ${(p) => (p.$primary ? 14 : 6)}px;
  padding: 0 0 2px;
  border: 1px solid ${(p) => (p.$primary ? "#5a9ad8" : "#acacac")};
  background: ${(p) => (p.$primary ? "linear-gradient(#ecf4fc, #dcecfc)" : "linear-gradient(#f2f2f2, #e5e5e5)")};
  ${(p) => p.$primary && "margin-left: auto;"}
`;
const SizeGrip = () => (
  <svg width="9" height="9" viewBox="0 0 9 9" fill="#b5b5b5" aria-hidden="true">
    <path d="M6 0h2v2H6zM3 3h2v2H3zM6 3h2v2H6zM0 6h2v2H0zM3 6h2v2H3zM6 6h2v2H6z" />
  </svg>
);
const GripSpot = styled.span`
  align-self: flex-end;
  margin-right: 3px;
`;

const PLACE_ICONS: Record<string, React.ReactNode> = {
  folder: <g><path d="M2 2l5-1v13l-5 1z" fill="#f3d873" stroke="#d9b84a" strokeWidth=".5" /><path d="M7 3h6v11H7z" fill="#edca58" /><path d="M7 6l4-2v10l-4 1z" fill="#fdf0b5" /></g>,
  dropbox: <path d="M4 1l4 3 4-3 4 3-4 3 4 3-4 2-4-2-4 2-4-2 4-3-4-3zM4 13l4-2 4 2-4 2z" fill="#5aa9e6" />,
  box: <g><rect x=".5" y=".5" width="15" height="15" fill="#fff" stroke="#1976bf" /><path d="M0 0h16v3H0z" fill="#1976bf" /><path d="M6 3v9" stroke="#1976bf" strokeWidth="2" /><circle cx="8.500" cy="9.500" r="2.700" fill="none" stroke="#1976bf" strokeWidth="1.800" /></g>,
  drive: <g><path d="M1 1l5-1v13l-5 2zM6 2h6v11H6z" fill="#f0d265" /><path d="M9 6l-4 8h5z" fill="#1b9b57" /><path d="M9 6l6 8h-5z" fill="#f5c21b" /><path d="M5 15l2-3h9l-2 3z" fill="#2c5fc4" /></g>,
  libraries: <g><path d="M0 2h6l1 2h8v10H0z" fill="#f0cf64" stroke="#c9a438" strokeWidth=".5" /><path d="M2 15c0-9 12-9 12 0h-3c0-4-6-4-6 0z" fill="#5fb6e0" /><path d="M3 5h11v2H3z" fill="#fff6c9" /></g>,
  documents: <g><path d="M2 .5h9l3 3v12H2z" fill="#fff" stroke="#7d8a96" /><path d="M4 4h5M4 6h3M4 8h3M4 10h8M4 12h8" stroke="#6f8fb0" /><path d="M8 5h4v4H8z" fill="#4a6f94" /></g>,
  music: <g><ellipse cx="5" cy="12" rx="4.500" ry="3.500" fill="#2b93d6" /><path d="M8 12V1c1 3 6 4 5 9c-1-3-3-4-4-4" stroke="#2b7fc0" fill="#59b0e6" /></g>,
  pictures: <g><rect x=".5" y="2.500" width="15" height="11" fill="#fff" stroke="#8a98a5" /><path d="M2 4h12v5H2z" fill="#7cc4ee" /><path d="M2 8c4-2 8 2 12 1v3H2z" fill="#2d7d6b" /></g>,
  videos: <g><path d="M1 0h14v16H1z" fill="#222" /><path d="M4 1h8v6H4z" fill="#8cc3e8" /><path d="M4 8h8v7H4z" fill="#3f9ad8" /><path d="M6 4h3v2H6z" fill="#c33" /><path d="M2.500 1v14M13.500 1v14" stroke="#fff" strokeDasharray="1.500 1.500" /></g>,
  homegroup: <g><circle cx="4" cy="8" r="3.500" fill="#3a76c4" /><circle cx="11" cy="4" r="3.500" fill="#43a648" /><circle cx="11" cy="12" r="3.700" fill="#3a76c4" /><path d="M4 8l6-3 1 6z" fill="#8fd06a" /></g>,
  computer: <g><path d="M4 2h12v9H4z" fill="#b9c4d6" stroke="#7c8798" strokeWidth=".6" /><path d="M5 3h10v7H5z" fill="#2330a8" /><path d="M9 3h6v3z" fill="#8aa2f0" /><path d="M0 4h3v10H0z" fill="#aab" /><path d="M7 13h7v1H7z" fill="#778" /></g>,
  disk: <g><path d="M1 0h4v4H1zM6 0h4v4H6zM1 5h4v4H1zM6 5h4v3H6z" fill="#28b4ea" /><path d="M0 11l2-2h12l2 2v4H0z" fill="#7a8a90" /><path d="M1 12h9v2H1z" fill="#5db37b" /></g>,
};
const PlaceIcon = ({ name }: { name: string }) => (
  <svg width="16" height="16" viewBox="0 0 16 16" aria-hidden="true">
    {PLACE_ICONS[name]}
  </svg>
);
const Tri = () => (
  <svg width="4" height="7" viewBox="0 0 4 7" aria-hidden="true">
    <path d="M0 0l4 3.500L0 7z" fill="#777" />
  </svg>
);

/* ---------- data ---------- */

const MENUS = "File Edit View Curve Surface Solid Mesh Dimension Transform Tools Analyze Render Panels Help".split(" ");
const TABS = ["Standard", "CPlanes", "Set View", "Display", "Select", "Viewport Layout", "Visibility", "Transform", "Curve Tools", "Surface Tools", "Solid Tools", "Mesh Tools", "Render Tools", "Drafting", "New in V5"];
const TOOLBAR = "hand gumball zoomInOut extents zoomWindow zoomSelected undoView+ zoomTarget zoomOne | carTop carBottom carFront carRight carLeft carBack carPersp | namedCar camera saveCar viewports ball ball2 | target targetSel cplane camPlane cube | planeTop planeBottom planeFront planeBack planeSide planeSide2 | orbit walk+ star+".split(" ");
const SECOND = "redEgg+ blueEgg+ polyhedron+ glow+ greenBox+ cone+ cage+ darkBox+".split(" ");
const SIDE = "arrow point+ polyline+ curve+ circle+ ellipse+ arc+ rect+ polygon+ fillet+ patch+ bend+ box+ spheres+ pipe+ surface+ puzzle explode split trim group+ ungroup editPts ctrlPts+ text scale+ array orient boolean+ project+ grid+ align+ mirror+ check+ solids+ render+".split(" ");

const TREE: { name: string; items: string[] }[] = [
  { name: "Document Properties", items: ["+Annotation", "Grid", "Mesh", "Notes", "+Rendering", "+Rhino Render", "+Units", "Web Browser"] },
  {
    name: "Rhino Options",
    items: ["Alerter", "Aliases", "+Appearance", "+Context Menu", "+Files", "General", "Idle Processor", "Keyboard", "Libraries", "Licenses", "+Modeling Aids", "Mouse", "Plug-ins", "Rendering", "Rhino Render Options", "RhinoScript", "Selection Menu", "+Toolbars", "Updates and Statistics", "+View"],
  },
];
const ALIASES: [string, string][] = [
  ["R3", "'_ROTATE3D"], ["REC", "'_RECTANGLE"], ["S", "'_Scale1d"], ["sc", "'_scale"], ["sc2", "'_scale2d"],
  ["sf", "'_splitsrf"], ["so", "'_offsetsurface"], ["SP", "'_SRFPT"], ["spl", "'_split"], ["su", "'_booleandifference"],
  ["SV", "'_SetView"], ["sw1", "'_Sweep1"], ["sw2", "'_Sweep2"], ["TR", "'_TRIM"], ["U", "_Undo"],
  ["uni", "'_booleanunion"], ["W", "'_SelWindow"], ["x", "'_explode"], ["Z", "'_Zoom"], ["ZE", "'_Zoom _Extents"],
  ["ZEA", "'_Zoom _All _Extents"], ["ZS", "'_Zoom _Selected"], ["ZSA", "'_Zoom _All _Selected"],
];
const PLACES: { icon: string; name: string; group?: boolean; above?: boolean; selected?: boolean }[] = [
  { icon: "dropbox", name: "Dropbox" },
  { icon: "box", name: "My Box Files" },
  { icon: "drive", name: "Google Drive" },
  { icon: "libraries", name: "Libraries", group: true, above: true },
  { icon: "documents", name: "Documents" },
  { icon: "music", name: "Music" },
  { icon: "pictures", name: "Pictures" },
  { icon: "videos", name: "Videos" },
  { icon: "homegroup", name: "Homegroup", group: true, above: true },
  { icon: "computer", name: "Computer", group: true, above: true },
  { icon: "disk", name: "OS (C:)", selected: true },
];

/* ---------- composed parts ---------- */

const Tools = ({ items }: { items: string[] }) => (
  <>
    {items.map((item, i) => {
      if (item === "|") return <Divider key={i} />;
      const name = item.replace("+", "");
      return (
        <ToolButton key={i} $more={item.endsWith("+")} aria-label={name}>
          <Glyph name={name} />
        </ToolButton>
      );
    })}
  </>
);

const ExpandSign = ({ open }: { open?: boolean }) => (
  <Expander aria-label={open ? "Collapse" : "Expand"}>
    <svg width="7" height="7" viewBox="0 0 7 7" shapeRendering="crispEdges" aria-hidden="true">
      <path d={open ? "M1 3.500h5" : "M1 3.500h5M3.500 1v5"} stroke="#345" />
    </svg>
  </Expander>
);

const OptionsDialog = () => (
  <Dialog $x={646} $y={254} $w={630} role="dialog" aria-label="Rhino Options">
    <DialogTitle>
      <DialogBrand>
        <RhinoMark />
      </DialogBrand>
      <DialogHeading>Rhino Options</DialogHeading>
      <DialogClose aria-label="Close">
        <CrossMark />
      </DialogClose>
    </DialogTitle>
    <OptionsBody>
      <Tree>
        {TREE.map((group, g) => (
          <React.Fragment key={group.name}>
            <TreeRow>
              <Guide $h $v $end={g > 0}>
                <ExpandSign open />
              </Guide>
              <TreeLabel $root>{group.name}</TreeLabel>
            </TreeRow>
            {group.items.map((item, i) => {
              const name = item.replace("+", "");
              return (
                <TreeRow key={i}>
                  <Guide $v={g === 0} />
                  <Guide $v $h $end={i === group.items.length - 1}>
                    {item !== name && <ExpandSign />}
                  </Guide>
                  <TreeLabel $marked={name === "Aliases"}>{name}</TreeLabel>
                </TreeRow>
              );
            })}
          </React.Fragment>
        ))}
      </Tree>
      <OptionsMain>
        <ColumnHeads>
          <span>Alias:</span>
          <span>Command macro:</span>
        </ColumnHeads>
        <TableBox>
          <AliasTable aria-label="Command aliases">
            <tbody>
              {ALIASES.map(([alias, macro]) => (
                <tr key={alias}>
                  <td>{alias}</td>
                  <td>{macro}</td>
                </tr>
              ))}
            </tbody>
          </AliasTable>
          <ScrollV>
            <Arrow aria-label="Scroll up"><Chevron dir="up" /></Arrow>
            <Track $size={189} />
            <Thumb $size={145} />
            <Arrow aria-label="Scroll down"><Chevron dir="down" /></Arrow>
          </ScrollV>
        </TableBox>
        <ButtonRow>
          <PushButton>Import</PushButton>
          <PushButton $focus>
            <RedFrame>Export</RedFrame>
          </PushButton>
          <PushButton>New</PushButton>
          <PushButton>Delete</PushButton>
        </ButtonRow>
        <ButtonRow $foot>
          <PushButton $w={115} $after={41}>Restore Defaults</PushButton>
          <PushButton $focus>OK</PushButton>
          <PushButton>Cancel</PushButton>
          <PushButton>Help</PushButton>
        </ButtonRow>
      </OptionsMain>
    </OptionsBody>
  </Dialog>
);

const SaveDialog = () => (
  <Dialog $x={1282} $y={255} $w={624} $light role="dialog" aria-label="Save Text File">
    <DialogTitle>
      <DialogBrand>
        <RhinoMark />
      </DialogBrand>
      <DialogHeading>Save Text File</DialogHeading>
      <DialogClose $red aria-label="Close">
        <CrossMark />
      </DialogClose>
    </DialogTitle>
    <SaveBody>
      <NavRow>
        <RoundButton aria-label="Back" $m={9}>
          <svg width="20" height="20" viewBox="0 0 20 20" fill="none" stroke="#6e6e6e">
            <circle cx="10" cy="10" r="9" strokeWidth="1.300" />
            <path d="M15 10H6M10 6l-4 4 4 4" strokeWidth="2" />
          </svg>
        </RoundButton>
        <RoundButton aria-label="Forward" $m={5}>
          <svg width="20" height="20" viewBox="0 0 20 20" fill="none" stroke="#cfcfcf">
            <circle cx="10" cy="10" r="9" strokeWidth="1.300" />
            <path d="M5 10h9M10 6l4 4-4 4" strokeWidth="2" />
          </svg>
        </RoundButton>
        <RoundButton aria-label="Recent locations" $m={2}>
          <Caret color="#666" />
        </RoundButton>
        <RoundButton aria-label="Up">
          <svg width="10" height="12" viewBox="0 0 10 12" fill="none" stroke="#6e6e6e" strokeWidth="1.800">
            <path d="M5 12V1.500M1 5.500l4-4 4 4" />
          </svg>
        </RoundButton>
        <Address>
          <PlaceIcon name="folder" />
          <Crumb $earlier aria-label="Earlier folders">
            <svg width="8" height="7" viewBox="0 0 8 7" fill="none" stroke="#666">
              <path d="M4 .5l-3 3 3 3M7.500 .5l-3 3 3 3" />
            </svg>
          </Crumb>
          <Crumb>A100b_GSI</Crumb>
          <Tri />
          <Crumb>Week 2</Crumb>
          <Tri />
          <AddressEnd>
            <Chevron dir="down" />
            <Refresh aria-label="Refresh">
              <svg width="11" height="12" viewBox="0 0 11 12" fill="none" stroke="#777" strokeWidth="1.700">
                <path d="M9.500 7a4 4 0 1 1-2-4.500" />
                <path d="M6 0h4v4z" fill="#777" stroke="none" />
              </svg>
            </Refresh>
          </AddressEnd>
        </Address>
        <SearchBox>
          <SearchInput placeholder="Search Week 2" aria-label="Search Week 2" />
          <svg width="11" height="11" viewBox="0 0 11 11" fill="none" stroke="#666" strokeWidth="1.500">
            <circle cx="7" cy="4" r="3" />
            <path d="M5 6l-4.500 4.500" strokeWidth="2" />
          </svg>
        </SearchBox>
      </NavRow>
      <FileTools>
        <FlatButton $gap={31}>
          Organize <Caret color="#1e395b" />
        </FlatButton>
        <FlatButton>New folder</FlatButton>
        <Push>
          <FlatButton $gap={31} $inner={10} aria-label="Change your view">
            <svg width="15" height="13" viewBox="0 0 15 13" fill="none" stroke="#7a8796" shapeRendering="crispEdges">
              <path d="M.5 .5h4v12h-4zM.5 4.500h4M.5 8.500h4M6 2.500h4M11 2.500h4M6 6.500h4M11 6.500h4M6 10.500h4M11 10.500h4" />
            </svg>
            <Caret color="#1e395b" />
          </FlatButton>
        </Push>
        <svg width="14" height="14" viewBox="0 0 14 14" fill="none" role="img" aria-label="Get help">
          <circle cx="7" cy="7" r="6.300" fill="#2f4fa8" stroke="#8aa0d6" />
          <path d="M5 5.500c0-3 4.500-2.500 4 0c-.3 1-2 1.300-2 2.800M7 9.500v1.500" stroke="#fff" strokeWidth="1.500" />
        </svg>
      </FileTools>
      <Panes>
        <Places>
          {PLACES.map((p) => (
            <Place key={p.name} $group={p.group} $above={p.above} $selected={p.selected}>
              <PlaceIcon name={p.icon} />
              {p.name}
            </Place>
          ))}
        </Places>
        <ScrollV>
          <Arrow aria-label="Scroll up"><Chevron dir="up" /></Arrow>
          <Track $size={67} />
          <Thumb $size={188} />
          <Track $size={26} />
          <Arrow aria-label="Scroll down"><Chevron dir="down" /></Arrow>
        </ScrollV>
        <Files>
          <FileTable>
            <colgroup>
              <col />
              <col width="120" />
              <col width="16" />
            </colgroup>
            <thead>
              <tr>
                <th>
                  Name
                  <SortMark>
                    <svg width="7" height="4" viewBox="0 0 7 4" aria-hidden="true">
                      <path d="M0 4l3.500-4L7 4z" fill="#5d7f9e" />
                    </svg>
                  </SortMark>
                </th>
                <th>Date modified</th>
                <th aria-label="More columns" />
              </tr>
            </thead>
            <tbody>
              <tr>
                <td>
                  <FileName>
                    <PlaceIcon name="folder" />
                    AutoCAD Tutorial
                  </FileName>
                </td>
                <td>1/27/2014 7:58 PM</td>
                <td />
              </tr>
            </tbody>
          </FileTable>
          <ScrollH>
            <Arrow aria-label="Scroll left"><Chevron dir="left" /></Arrow>
            <Thumb $size={242} />
            <Track $size={124} />
            <Arrow aria-label="Scroll right"><Chevron dir="right" /></Arrow>
          </ScrollH>
        </Files>
      </Panes>
      <Form>
        <FormLabel htmlFor="file-name">File name:</FormLabel>
        <Field>
          <NameInput id="file-name" defaultValue="Alias.txt" />
          <Chevron dir="down" />
        </Field>
        <FormLabel htmlFor="file-type">Save as type:</FormLabel>
        <Field>
          <TypeSelect id="file-type">
            <option>Text files (*.txt)</option>
          </TypeSelect>
          <TypeMark />
          <Chevron dir="down" />
        </Field>
      </Form>
      <SaveFoot>
        <FolderToggle>
          <svg width="16" height="16" viewBox="0 0 16 16" aria-hidden="true">
            <circle cx="8" cy="8" r="7.500" fill="#dfe6ef" stroke="#a5b0bf" />
            <path d="M4 10l4-4 4 4z" fill="#1f3355" />
          </svg>
          Hide Folders
        </FolderToggle>
        <SaveButton $primary>Save</SaveButton>
        <SaveButton>Cancel</SaveButton>
        <GripSpot>
          <SizeGrip />
        </GripSpot>
      </SaveFoot>
    </SaveBody>
  </Dialog>
);

const PANEL_TABS: { name: string; icon: React.ReactNode }[] = [
  {
    name: "Properties",
    icon: (
      <g fill="none" strokeWidth="3">
        <path d="M8 2.500a5.500 5.500 0 0 1 5 3.500" stroke="#f0a020" />
        <path d="M13 6a5.500 5.500 0 0 1-2.500 7" stroke="#e02060" />
        <path d="M10.500 13a5.500 5.500 0 0 1-6.500-1.500" stroke="#3050d8" />
        <path d="M4 11.500A5.500 5.500 0 0 1 8 2.500" stroke="#28a848" />
      </g>
    ),
  },
  { name: "Layers", icon: <g><path d="M1 1l3 2 11 2v6l-6 4-5-2z" fill="#123a9c" /><path d="M1 1h8l6 4-6 5-5-2z" fill="#e83a1c" /><path d="M4 8l5 3 6-5v2l-6 4-5-2z" fill="#f4c23a" /></g> },
  { name: "Display", icon: <g><path d="M1 2h14v10H1z" fill="#c9cdd2" stroke="#222" strokeWidth="1.500" /><path d="M5 13h6v2H5z" fill="#222" /></g> },
  { name: "Help", icon: <g><path d="M.5 1.500h15v13H.5z" fill="#dfe4f4" stroke="#5b6fae" /><path d="M1 2h14v2H1z" fill="#5b76c9" /><circle cx="8" cy="9" r="4.500" fill="#2c49a8" /><path d="M6.500 8c0-2 3-2 3 0c0 1-1.500 1-1.500 2.500M8 11.500v1" stroke="#fff" fill="none" /></g> },
];

export default function App() {
  return (
    <Page>
      <GlobalStyle />
      <MainWindow>
        <TitleBar>
          <Brand>
            <RhinoMark />
          </Brand>
          <Title>Untitled - Rhinoceros Educational (32-bit)</Title>
          <WindowButtons>
            <WindowButton aria-label="Minimize">
              <svg width="8" height="9" viewBox="0 0 8 9"><path d="M0 6h8v2H0z" fill="#222" /></svg>
            </WindowButton>
            <WindowButton aria-label="Restore">
              <svg width="10" height="10" viewBox="0 0 10 10" fill="none" stroke="#222">
                <path d="M.5 3.500h7v6h-7zM2 1h7.500v7M.5 4.200h7" />
              </svg>
            </WindowButton>
            <WindowButton $close aria-label="Close">
              <CrossMark />
            </WindowButton>
          </WindowButtons>
        </TitleBar>
        <MenuBar>
          {MENUS.map((m) => (
            <MenuItem key={m}>{m}</MenuItem>
          ))}
        </MenuBar>
        <CommandArea>
          <History>
            <HistoryText>{"Loading Rhino Render, version 1.50, Oct  8 2013, 17:51:22\nCommand: _Options"}</HistoryText>
            <HistoryScroll>
              <Chevron dir="up" />
              <Chevron dir="down" />
            </HistoryScroll>
          </History>
          <Prompt>
            <PromptLabel htmlFor="command">Command:</PromptLabel>
            <PromptInput id="command" />
            <Spinner>
              <SpinButton aria-label="Previous command"><Caret /></SpinButton>
              <SpinButton $flip aria-label="Next command"><Caret /></SpinButton>
            </Spinner>
          </Prompt>
        </CommandArea>
        <TabStrip>
          {TABS.map((t) => (
            <ToolTab key={t} $active={t === "Set View"}>
              {t}
            </ToolTab>
          ))}
          <Push>
            <Gear />
          </Push>
        </TabStrip>
        <ToolRow>
          <Tools items={TOOLBAR} />
        </ToolRow>
        <ToolRow $second>
          <Tools items={SECOND} />
        </ToolRow>
        <Workspace>
          <SideTools>
            <Grip />
            <SideGrid>
              <Tools items={SIDE} />
            </SideGrid>
          </SideTools>
          <Viewports>
            <Viewport name="Top" />
            <Viewport name="Perspective" active />
            <Viewport name="Front" axis="53%" />
            <Viewport name="Right" axis="53%" />
          </Viewports>
          <Panel>
            <PanelTabs>
              {PANEL_TABS.map((t, i) => (
                <PanelTab key={t.name} $active={i === 0}>
                  <svg width="16" height="16" viewBox="0 0 16 16" aria-hidden="true">
                    {t.icon}
                  </svg>
                  {t.name}
                </PanelTab>
              ))}
              <Push>
                <Gear />
              </Push>
            </PanelTabs>
            <PanelBody>
              <PanelGroup>
                <PanelHeading>Viewport</PanelHeading>
                <PanelField $gap={120} aria-label="Title" />
                <PanelField $gap={82} aria-label="Camera" />
                <PanelField $gap={25} aria-label="Target" />
                <PanelField $gap={0} aria-label="Wallpaper" />
              </PanelGroup>
            </PanelBody>
          </Panel>
        </Workspace>
      </MainWindow>
      <OptionsDialog />
      <SaveDialog />
    </Page>
  );
}
